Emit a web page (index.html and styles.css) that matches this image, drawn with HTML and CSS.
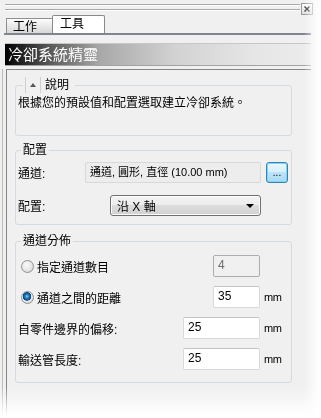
FILE: index.html
```html
<!DOCTYPE html>
<html lang="zh-Hant">
<head>
    <meta charset="UTF-8">
    <meta name="viewport" content="width=device-width, initial-scale=1.0">
    <title>冷卻系統精靈</title>
    <link rel="stylesheet" href="styles.css">
</head>
<body>
    <div class="pane">
        <div class="grip">
            <div class="grip-lines"></div>
            <span class="close">
                <svg width="6" height="6" viewBox="0 0 6 6"><path d="M0.5 0.5L5.5 5.5M5.5 0.5L0.5 5.5" stroke="#333" stroke-width="1.3"/></svg>
            </span>
        </div>

        <div class="tabs">
            <div class="tab">工作</div>
            <div class="tab active">工具</div>
        </div>

        <div class="title">冷卻系統精靈</div>

        <div class="outer">
            <div class="frame">
                <fieldset class="group desc">
                    <legend><span class="toggle"><span class="tri"></span></span>說明</legend>
                    <p>根據您的預設值和配置選取建立冷卻系統。</p>
                </fieldset>

                <fieldset class="group setup">
                    <legend>配置</legend>
                    <div class="row">
                        <span class="label">通道:</span>
                        <span class="field path">通道, 圓形, 直徑 (10.00 mm)</span>
                        <span class="btn-more">...</span>
                    </div>
                    <div class="row">
                        <span class="label">配置:</span>
                        <span class="combo">沿 X 軸<span class="arrow"></span></span>
                    </div>
                </fieldset>

                <fieldset class="group dist">
                    <legend>通道分佈</legend>
                    <div class="row">
                        <span class="radio"></span>
                        <span class="opt">指定通道數目</span>
                        <span class="field num disabled">4</span>
                        <span class="unit"></span>
                    </div>
                    <div class="row">
                        <span class="radio checked"></span>
                        <span class="opt">通道之間的距離</span>
                        <span class="field num">35</span>
                        <span class="unit">mm</span>
                    </div>
                    <div class="row">
                        <span class="label">自零件邊界的偏移:</span>
                        <span class="field wide">25</span>
                        <span class="unit">mm</span>
                    </div>
                    <div class="row">
                        <span class="label">輸送管長度:</span>
                        <span class="field wide">25</span>
                        <span class="unit">mm</span>
                    </div>
                </fieldset>
            </div>
        </div>
    </div>
</body>
</html>
```

FILE: styles.css
```css
body {
    margin: 0;
    background: #fff;
    font-family: "Liberation Sans", "Noto Sans CJK TC", sans-serif;
    font-size: 12px;
    color: #000;
}

.pane {
    width: 321px;
    height: 418px;
    background: #f0f0f0;
    display: flex;
    flex-direction: column;
    -webkit-mask-image: linear-gradient(to right, #000 304px, transparent 320px), linear-gradient(to bottom, #000 387px, transparent 416px);
    -webkit-mask-composite: source-in;
    mask-image: linear-gradient(to right, #000 304px, transparent 320px), linear-gradient(to bottom, #000 387px, transparent 416px);
    mask-composite: intersect;
}

/* top grip with close box */
.grip {
    display: flex;
    height: 15px;
    padding-left: 5px;
}

.grip-lines {
    width: 295px;
    height: 4px;
    margin-top: 4px;
    border-top: 1px solid #a9a9a9;
    border-bottom: 1px solid #a9a9a9;
    box-shadow: inset 0 1px 0 #fff, 0 1px 0 #fff;
}

.close {
    width: 10px;
    height: 10px;
    margin: 3px 0 0 1px;
    border: 1px solid #9a9a9a;
    background: linear-gradient(#fbfbfb, #dedede);
    display: flex;
    align-items: center;
    justify-content: center;
}

/* tabs */
.tabs {
    display: flex;
    align-items: flex-end;
    width: 305px;
    height: 18px;
    margin-left: 4px;
    padding-left: 2px;
    border-bottom: 2px solid #7e868f;
}

.tab {
    box-sizing: border-box;
    width: 47px;
    height: 15px;
    padding: 2px 0 0 6px;
    border: 1px solid #8f8f8f;
    border-bottom: none;
    background: linear-gradient(#fdfdfd, #d6d6d6);
    line-height: 13px;
}

.tab.active {
    width: 53px;
    height: 18px;
    margin-left: -1px;
    padding: 2px 0 0 7px;
    background: #fff;
    border-color: #898989;
    border-radius: 2px 2px 0 0;
}

/* title bar */
.title {
    box-sizing: border-box;
    width: 306px;
    height: 23px;
    margin: 8px 0 0 5px;
    padding: 1px 0 0 3px;
    border-top: 1px solid #c6c6c6;
    border-bottom: 1px solid #a3a3a3;
    background: linear-gradient(to right, #000 0, #5a5a5a 45px, #a8a8a8 95px, #d2d2d2 170px, #e6e6e6 250px, #ececec);
    color: #fff;
    font-size: 15px;
    line-height: 19px;
}

/* content frame */
.outer {
    flex: 1;
    display: flex;
    margin: 3px 10px 0 2px;
    padding-left: 3px;
    border-left: 1px solid #bcbcbc;
}

.frame {
    flex: 1;
    border-left: 1px solid #868686;
    border-top: 1px solid #868686;
}

.group {
    box-sizing: border-box;
    width: 277px;
    min-inline-size: 0;
    margin: 0 0 0 8px;
    padding: 0 3px 0 2px;
    border: 1px solid #d2dbe1;
    border-radius: 3px;
}

.group legend {
    margin-left: 3px;
    padding: 0 2px;
    line-height: 14px;
}

/* description */
.desc {
    margin-top: 7px;
    padding-bottom: 24px;
}

.desc legend {
    display: flex;
    align-items: center;
    height: 16px;
    margin-left: 5px;
    padding: 0 6px 0 2px;
}

.toggle {
    box-sizing: border-box;
    width: 16px;
    height: 16px;
    margin-right: 4px;
    border-left: 1px solid #cfcfcf;
    border-right: 1px solid #cfcfcf;
    display: flex;
    align-items: center;
    justify-content: center;
}

.tri {
    width: 0;
    height: 0;
    border-left: 3px solid transparent;
    border-right: 3px solid transparent;
    border-bottom: 4px solid #555;
}

.desc p {
    margin: 2px 0 0;
    line-height: 16px;
}

/* setup */
.setup {
    margin-top: 7px;
    padding-top: 5px;
    padding-bottom: 8px;
}

.row {
    display: flex;
    align-items: center;
}

.setup .row {
    height: 21px;
}

.setup .row + .row {
    margin-top: 12px;
}

.setup .label {
    width: 67px;
}

.field {
    box-sizing: border-box;
    height: 100%;
    padding: 1px 4px 0;
    border: 1px solid #d9d9d9;
    border-top-color: #c3c3c3;
    border-radius: 2px;
    background: #fff;
    line-height: 17px;
    white-space: nowrap;
}

.field.path {
    width: 176px;
    background: #ededed;
    border-color: #d8d8d8;
    font-size: 11px;
}

.btn-more {
    box-sizing: border-box;
    width: 22px;
    height: 21px;
    margin-left: 5px;
    border: 1px solid #3c7fb1;
    border-radius: 3px;
    box-shadow: inset 0 0 0 1px #7ad6fa;
    background: linear-gradient(#eaf7fd, #d6effc 50%, #bde4f8 50%, #a9d9f3);
    font-size: 10px;
    line-height: 19px;
    text-align: center;
}

.combo {
    box-sizing: border-box;
    display: flex;
    align-items: center;
    width: 151px;
    height: 21px;
    margin-left: 25px;
    padding: 0 6px;
    border: 1px solid #707070;
    border-radius: 3px;
    box-shadow: inset 0 0 0 1px #fcfcfc;
    background: linear-gradient(#f4f4f4, #ececec 50%, #dddddd 50%, #d0d0d0);
}

.arrow {
    margin-left: auto;
    width: 0;
    height: 0;
    border-left: 4px solid transparent;
    border-right: 4px solid transparent;
    border-top: 4px solid #000;
}

/* distribution */
.dist {
    margin-top: 9px;
    padding-top: 7px;
    padding-bottom: 12px;
}

.dist .row {
    height: 22px;
}

.dist .row + .row {
    margin-top: 9px;
}

.radio {
    box-sizing: border-box;
    width: 13px;
    height: 13px;
    margin-left: 3px;
    border: 1px solid #8f9090;
    border-radius: 50%;
    background: radial-gradient(circle at 40% 35%, #fafafa, #e4e4e4 60%, #c9c9c9);
}

.radio.checked {
    background: radial-gradient(circle at 45% 40%, #9edcff 0, #2a8ad4 1.5px, #0d4f95 3.5px, #0a3f78 4px, transparent 4.5px), radial-gradient(circle at 40% 35%, #fafafa, #e4e4e4 60%, #c9c9c9);
}

.opt {
    flex: 1;
    margin-left: 3px;
}

.dist .label {
    flex: 1;
}

.field.num {
    width: 47px;
}

.field.wide {
    width: 77px;
}

.field.disabled {
    background: #f0f0f0;
    border-color: #adadad;
    color: #6d6d6d;
}

.unit {
    box-sizing: border-box;
    width: 28px;
    padding-left: 4px;
    font-size: 11px;
    letter-spacing: -0.5px;
}
```
